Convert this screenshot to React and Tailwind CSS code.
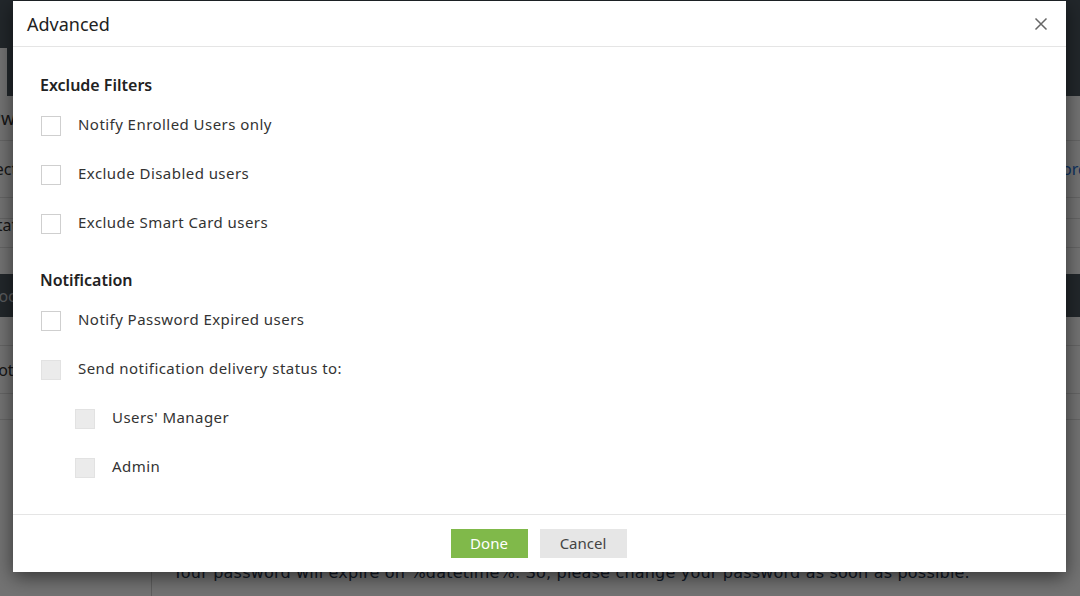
import React from "react";

function Box({ disabled }) {
  return (
    <span
      className={
        "block w-5 h-5 shrink-0 border " +
        (disabled ? "bg-[#ebebeb] border-[#e2e2e2]" : "bg-white border-[#cfcfcf]")
      }
    />
  );
}

function Row({ label, disabled, nested }) {
  return (
    <div className={"flex items-center h-[49px] " + (nested ? "pl-[49px]" : "pl-[15px]")}>
      <Box disabled={disabled} />
      <span className="ml-[17px] pb-[2px] text-[15px] tracking-[0.45px] text-[#333] leading-none">{label}</span>
    </div>
  );
}

export default function App() {
  return (
    <div className="relative w-[1080px] h-[596px] overflow-hidden bg-white" style={{ fontFamily: '"Noto Sans", "Open Sans", sans-serif' }}>
      {/* background page */}
      <div className="flex flex-col w-full h-full">
        <div className="h-[48px] bg-[#4c5760]" />
        <div className="flex h-[48px]">
          <div className="w-[7px] bg-white" />
          <div className="flex-1 bg-[#4c5760]" />
        </div>
        <div className="flex h-[45px] items-center border-b border-[#e0e0e0] text-[18px] text-[#333]">
          <span className="-ml-[10px]">Pwo</span>
        </div>
        <div className="flex h-[57px] items-center justify-between border-b border-[#e0e0e0] text-[16px] text-[#333]">
          <span className="-ml-[14px]">Sect</span>
          <span className="mr-[-12px] text-[#1d6fd6]">Wordl</span>
        </div>
        <div className="h-[21px] border-b border-[#e0e0e0]" />
        <div className="flex h-[29px] items-center border-b border-[#e0e0e0] text-[16px] text-[#333]">
          <span className="-ml-[12px] -mt-[16px]">Stat</span>
        </div>
        <div className="h-[26px]" />
        <div className="flex h-[43px] items-center bg-[#4c5760] text-[16px] text-[#c9cdd1]">
          <span className="-ml-[10px]">Locat</span>
        </div>
        <div className="h-[29px] border-b border-[#e0e0e0]" />
        <div className="flex h-[48px] items-center border-b border-[#e0e0e0] text-[16px] text-[#333]">
          <span className="-ml-[14px]">Noti</span>
        </div>
        <div className="h-[26px] border-b border-[#e0e0e0]" />
        <div className="flex flex-1">
          <div className="w-[152px] border-r border-[#d0d0d0]" />
          <div className="pl-[21px] pt-[141px] text-[16px] tracking-[0.2px] text-[#2b3a55] whitespace-nowrap" style={{ fontFamily: '"DejaVu Sans", sans-serif' }}>
            Your password will expire on %datetime%. So, please change your password as soon as possible.
          </div>
        </div>
      </div>

      {/* overlay */}
      <div className="absolute inset-0 bg-black/[0.55]" />

      {/* modal */}
      <div className="absolute left-[13px] top-[1px] w-[1053px] h-[571px] bg-white shadow-[0_5px_18px_rgba(0,0,0,0.55)] flex flex-col">
        <div className="flex items-center justify-between h-[46px] border-b border-[#e5e5e5] pl-[14px] pr-[18px]">
          <span className="text-[18px] text-[#222] mt-[2px]">Advanced</span>
          <svg width="14" height="14" viewBox="0 0 14 14" className="text-[#666]">
            <path d="M1.5 1.5 L12.5 12.5 M12.5 1.5 L1.5 12.5" stroke="currentColor" strokeWidth="1.5" />
          </svg>
        </div>
        <div className="flex-1 pt-[26px] px-[13px]">
          <div className="h-6 flex items-center pl-[14px] text-[16px] font-semibold text-[#222] mb-[4px]">Exclude Filters</div>
          <Row label="Notify Enrolled Users only" />
          <Row label="Exclude Disabled users" />
          <Row label="Exclude Smart Card users" />
          <div className="h-6 flex items-center pl-[14px] mt-[20px] text-[16px] font-semibold text-[#222] mb-[4px]">Notification</div>
          <Row label="Notify Password Expired users" />
          <Row label="Send notification delivery status to:" disabled />
          <Row label="Users' Manager" disabled nested />
          <Row label="Admin" disabled nested />
        </div>
        <div className="flex justify-center gap-3 border-t border-[#e5e5e5] pt-[14px] pb-[14px] pr-[2px]">
          <button className="h-[29px] w-[77px] bg-[#80b94a] text-white text-[15px]">Done</button>
          <button className="h-[29px] w-[87px] bg-[#e6e6e6] text-[#444] text-[15px]">Cancel</button>
        </div>
      </div>
    </div>
  );
}
